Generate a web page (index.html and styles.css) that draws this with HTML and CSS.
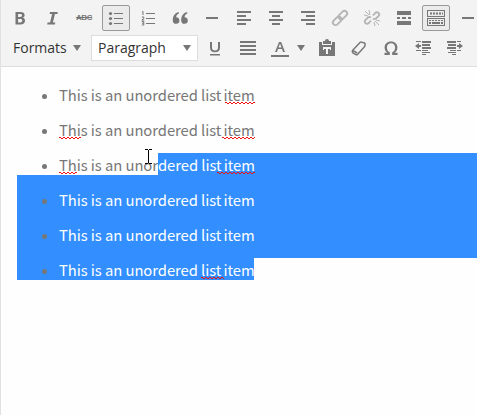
FILE: index.html
```html
<!DOCTYPE html>
<html lang="en">
<head>
<meta charset="utf-8">
<title>Editor</title>
<link rel="stylesheet" href="styles.css">
</head>
<body>
<svg class="defs" width="0" height="0"><defs><pattern id="wave" width="4" height="2" patternUnits="userSpaceOnUse"><path d="M0 0h2v1h-2zM2 1h2v1h-2z" fill="#f01010"/></pattern></defs></svg>
<div class="editor">
<div class="toolbar">
<div class="row">
<button class="btn"><svg viewBox="0 0 20 20"><path fill-rule="evenodd" d="M5.500 4h4.700c3 0 4.400 1.100 4.400 3.100 0 1.400-.7 2.300-1.900 2.700 1.500.3 2.300 1.300 2.300 2.900 0 2.400-1.700 3.800-4.500 3.800h-5zm2.600 2.100v2.800h2c1.300 0 1.900-.5 1.900-1.400 0-1-.6-1.400-2-1.400zm0 4.800v3.500h2.200c1.300 0 2-.6 2-1.800 0-1.100-.7-1.700-2.100-1.700z"/></svg></button>
<button class="btn"><svg viewBox="0 0 20 20"><path d="M8 4h7.800l-.4 1.900h-2.500l-2 8.600h2.400l-.4 2H5.200l.4-2h2.500l2-8.600H7.600z"/></svg></button>
<button class="btn abc"><span>ABC</span></button>
<button class="btn on"><svg viewBox="0 0 20 20"><path d="M8 5h9v1H8zM8 10h9v1H8zM8 15h9v1H8z"/><circle cx="4.500" cy="5.500" r="1.600"/><circle cx="4.500" cy="10.500" r="1.600"/><circle cx="4.500" cy="15.500" r="1.600"/></svg></button>
<button class="btn"><svg viewBox="0 0 20 20"><path d="M8 5h9v1H8zM8 10h9v1H8zM8 15h9v1H8z"/><path class="thin" d="M4 4l1-.5V7M3.800 9h2v1.500l-2 1.500h2.400M3.800 13.500h2V17h-2M4 15.200h1.700"/></svg></button>
<button class="btn"><svg viewBox="0 0 20 20"><path d="M8.800 4v1.600C7 6.400 6.200 7.600 6.200 9.200a3.300 3.300 0 1 1-3.400 3.500C2.600 8 4.800 5 8.800 4zM17.200 4v1.600c-1.800.8-2.600 2-2.600 3.600a3.300 3.300 0 1 1-3.400 3.500C11 8 13.200 5 17.200 4z"/></svg></button>
<button class="btn"><svg viewBox="0 0 20 20"><path d="M4 9h12v2H4z"/></svg></button>
<button class="btn"><svg viewBox="0 0 20 20"><path d="M3 3h14v2H3zM3 7h9v2H3zM3 11h14v2H3zM3 15h9v2H3z"/></svg></button>
<button class="btn"><svg viewBox="0 0 20 20"><path d="M3 3h14v2H3zM6 7h8v2H6zM3 11h14v2H3zM6 15h8v2H6z"/></svg></button>
<button class="btn"><svg viewBox="0 0 20 20"><path d="M3 3h14v2H3zM8 7h9v2H8zM3 11h14v2H3zM8 15h9v2H8z"/></svg></button>
<button class="btn dim"><svg viewBox="0 0 20 20"><g class="link" transform="rotate(-45 10 10)"><rect x="1" y="7.300" width="10" height="5.400" rx="2.700"/><rect x="9" y="7.300" width="10" height="5.400" rx="2.700"/></g></svg></button>
<button class="btn dim"><svg viewBox="0 0 20 20"><g class="link"><path d="M11 7.500l2.500-2.800q1.500-1 3 .2t.2 3L14 10.500q-1.500 1-3 0M9 12.500l-2.500 2.800q-1.500 1-3-.2t-.2-3L6 9.500q1.500-1 3 0"/><path class="thin" d="M7 2l1 5M3 3l4 4M2 7l4 1M13 18l-1-4M17 17l-4-4M18 13l-4-1"/></g></svg></button>
<button class="btn"><svg viewBox="0 0 20 20"><path d="M3 3h14v4H3zM3 9h3v2H3zM8 9h4v2H8zM14 9h3v2h-3zM3 13h14v4H3z"/></svg></button>
<button class="btn on"><svg viewBox="0 0 20 20"><path fill-rule="evenodd" d="M1 2h18v7H1zM2 3v5h16V3zM1 10h18v8H1zM2 11v6h16v-6z"/><path d="M4 4.500h2v2H4zM7 4.500h2v2H7zM10 4.500h2v2h-2zM13 4.500h2v2h-2zM16 4.500h1v2h-1zM3 12h2v1H3zM6 12h2v1H6zM9 12h2v1H9zM12 12h2v1h-2zM15 12h2v1h-2zM3 14h2v2H3zM6 14h8v2H6zM15 14h2v2h-2z"/></svg></button>
<button class="btn"><svg viewBox="0 0 20 20"><path d="M4 9h12v2H4z"/></svg></button>
</div>
<div class="row second">
<button class="formats">Formats<i class="caret"></i></button>
<button class="select">Paragraph<i class="caret"></i></button>
<button class="btn"><svg viewBox="0 0 20 20"><path d="M5 4h2v5.500q0 3 3 3t3-3V4h2v5.500q0 4.700-5 4.700t-5-4.700zM5 16h10v1.500H5z"/></svg></button>
<button class="btn justify"><svg viewBox="0 0 20 20"><path d="M2 3h16v2H2zM2 7h16v2H2zM2 11h16v2H2zM2 15h16v2H2z"/></svg></button>
<button class="btn color"><svg viewBox="0 0 20 20"><path fill-rule="evenodd" d="M5 14L9 4h2.200L15 14h-2l-1-3H8l-1 3zM8.500 9.500h3L10 5.500zM1 17h18v2H1z"/></svg><i class="caret"></i></button>
<button class="btn"><svg viewBox="0 0 20 20"><path fill-rule="evenodd" d="M2 4h3v3h10V4h3v14H2zM6 9v3h1v-1h2v5h2v-5h2v1h1V9zM6 3h2q0-2 2-2t2 2h2v3H6z"/></svg></button>
<button class="btn"><svg viewBox="0 0 20 20"><g class="eraser"><path d="M3.500 12.500L11 4.500q.7-.6 1.400-.4l3 .9q.9.500.7 1.400l-.4 2L8.500 16.500q-.7.600-1.600.2l-3-1.800q-1-.9-.4-2.400zM3.700 12.300l4.500 2.700"/></g></svg></button>
<button class="btn"><svg viewBox="0 0 20 20"><path d="M3.500 17v-2.200h3C4.400 13.400 3.600 11.800 3.600 9.500 3.600 6 6.200 3.500 10 3.500s6.400 2.500 6.400 6c0 2.300-.8 3.900-2.900 5.300h3V17h-5.300v-2.700c2-.9 2.900-2.500 2.900-4.800 0-2.600-1.500-4.300-4.100-4.300S5.900 6.900 5.900 9.500c0 2.300.9 3.900 2.900 4.800V17z"/></svg></button>
<button class="btn"><svg viewBox="0 0 20 20"><path d="M3 3h5v1H3zM9 3h9v2H9zM9 6h8v2H9zM9 9h9v2H9zM9 12h6v1H9zM3 12h5v1H3zM9 14h8v1H9zM9 16h4v1H9zM2 8l4-3v2h2v2H6v2z"/></svg></button>
<button class="btn"><svg viewBox="0 0 20 20"><path d="M2 3h9v2H2zM12 3h4v1h-4zM3 6h8v2H3zM2 9h9v2H2zM5 12h6v1H5zM12 12h4v1h-4zM3 14h8v1H3zM7 16h4v1H7zM18 8l-4-3v2h-2v2h2v2z"/></svg></button>
</div>
</div>
<div class="content">
<ul class="list">
<li><span>This is an unordered list <span class="word last">item<svg class="sq w30"><rect width="100%" height="2" fill="url(#wave)"/></svg></span></span></li>
<li><span><span class="word">This<svg class="sq left w22"><rect width="100%" height="2" fill="url(#wave)"/></svg></span> is an unordered list <span class="word last">item<svg class="sq w33"><rect width="100%" height="2" fill="url(#wave)"/></svg></span></span></li>
<li><span class="before"><span class="word">This<svg class="sq left w18"><rect width="100%" height="2" fill="url(#wave)"/></svg></span> is an unor</span><span class="sel">dered list <span class="word last">item<svg class="sq w38"><rect width="100%" height="2" fill="url(#wave)"/></svg></span></span></li>
<li class="full"><span>This is an unordered list <span class="word last">item</span></span></li>
<li class="full"><span>This is an unordered list <span class="word last">item</span></span></li>
<li class="end"><span>This is an unordered <span class="word">list<svg class="sq left w23"><rect width="100%" height="2" fill="url(#wave)"/></svg></span> <span class="word last">item</span></span></li>
</ul>
<svg class="cursor" viewBox="0 0 7 16"><path d="M0 0h3v1H0zM4 0h3v1H4zM3 1h1v13H3zM0 14h3v1H0zM4 14h3v1H4z"/></svg>
</div>
</div>
</body>
</html>
```
FILE: styles.css
```css
* { box-sizing: border-box; }
body { margin: 0; background: #fefefe; overflow: hidden; }
.defs { position: absolute; }
.editor { height: 415px; border-left: 1px solid #e1e1e1; overflow: hidden; }
.toolbar { height: 67px; padding: 5px 0 0 5px; background: #f3f3f3; border-bottom: 1px solid #dedede; overflow: hidden; }
.row { display: flex; gap: 4px; height: 26px; }
.second { margin-top: 4px; }
button { margin: 0; padding: 0; border: 0; background: none; font: 14px/24px "Open Sans", sans-serif; color: #333; text-align: left; }
.btn { flex: none; width: 28px; height: 26px; display: flex; align-items: center; justify-content: center; border: 1px solid transparent; border-radius: 2px; }
.btn svg { flex: none; width: 20px; height: 20px; fill: #777; }
.on { background: #ebebeb; border-color: #999; }
.dim { opacity: .5; }
.thin { fill: none; stroke: #777; stroke-width: 1; }
.link { fill: none; stroke: #777; stroke-width: 1.8; }
.eraser { fill: none; stroke: #777; stroke-width: 1.5; }
.abc { font: 700 8px/24px "Liberation Sans", sans-serif; color: #777; letter-spacing: -.4px; text-decoration: line-through; }
.caret { flex: none; border: 4px solid transparent; border-top: 6px solid #777; border-bottom: 0; }
.formats { display: flex; align-items: center; justify-content: space-between; width: 81px; padding: 0 6px 0 7px; }
.select { display: flex; align-items: center; justify-content: space-between; width: 107px; padding: 0 6px; border: 1px solid #ddd; background: #fff; }
.second .justify { margin-left: 1px; }
.color { width: 43px; justify-content: flex-start; padding-left: 3px; gap: 7px; }
.second .select + .btn { margin-left: -1px; }
.content { position: relative; padding: 3px 0 0 16px; }
.list { margin: 0; padding: 0; list-style: none; font: 14.8px/22px "Noto Sans CJK SC", sans-serif; letter-spacing: -.06px; color: #777; }
.list li { display: flex; height: 35px; padding: 13px 0 0 42px; position: relative; white-space: pre; }
.list li::before { content: ""; position: absolute; left: 25px; bottom: 6px; width: 5px; height: 5px; border-radius: 50%; background: #777; }
.list li > span { height: 22px; line-height: 24px; }
.list .before { width: 99px; }
.list .sel { flex: 1; background: #338fff; color: #fff; }
.full { background: #338fff; color: #fff; }
.list .end { width: 237px; color: #fff; background: #338fff; }
.end::after { content: ""; position: absolute; left: 237px; top: 0; width: 300px; height: 13px; background: #338fff; }
.word { position: relative; }
.last { margin-left: -1px; }
.sq { position: absolute; right: 0; bottom: 1px; height: 2px; }
.left { left: 0; right: auto; }
.w18 { width: 18px; } .w22 { width: 22px; } .w23 { width: 23px; } .w30 { width: 30px; } .w33 { width: 33px; } .w38 { width: 38px; }
.cursor { position: absolute; left: 144px; top: 82px; width: 7px; height: 16px; }
```
